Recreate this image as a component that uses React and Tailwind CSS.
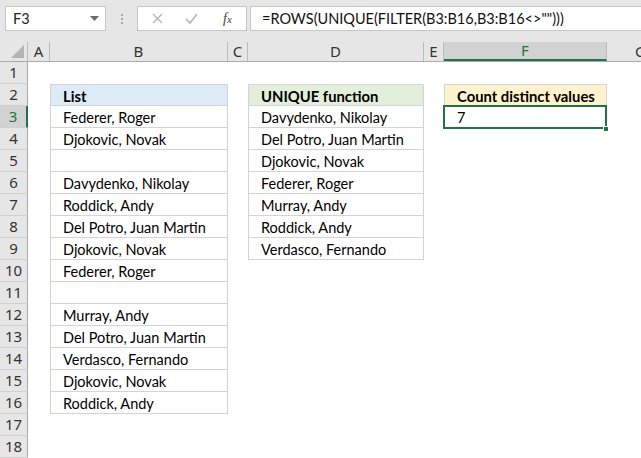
import React from 'react'

const cols = [
  { key: 'A', w: 'w-[22px]' },
  { key: 'B', w: 'w-[178px]' },
  { key: 'C', w: 'w-[20px]' },
  { key: 'D', w: 'w-[176px]' },
  { key: 'E', w: 'w-[20px]' },
  { key: 'F', w: 'w-[163px]' },
  { key: 'G', w: 'w-[68px] shrink-0' },
]

const listB = [
  'Federer, Roger', 'Djokovic, Novak', '', 'Davydenko, Nikolay', 'Roddick, Andy',
  'Del Potro, Juan Martin', 'Djokovic, Novak', 'Federer, Roger', '', 'Murray, Andy',
  'Del Potro, Juan Martin', 'Verdasco, Fernando', 'Djokovic, Novak', 'Roddick, Andy',
]

const listD = [
  'Davydenko, Nikolay', 'Del Potro, Juan Martin', 'Djokovic, Novak', 'Federer, Roger',
  'Murray, Andy', 'Roddick, Andy', 'Verdasco, Fernando',
]

const cellFont = { fontFamily: 'Lato, "Liberation Sans", sans-serif' }

const Cell = ({ text, bold, bg, top }) => (
  <div
    className={`h-full flex items-center pl-[12px] pt-[2px] border-x border-b border-[#d4d4d4] ${top ? 'border-t' : ''} ${bg || ''} ${bold ? 'font-bold text-[14.8px]' : 'text-[14.5px]'} text-black whitespace-nowrap`}
    style={cellFont}
  >
    {text}
  </div>
)

const App = () => {
  const rows = Array.from({ length: 18 }, (_, i) => i + 1)

  const content = (r, col) => {
    if (col === 'B') {
      if (r === 2) return <Cell text="List" bold bg="bg-[#ddebf7]" top />
      if (r >= 3 && r <= 16) return <Cell text={listB[r - 3]} />
    }
    if (col === 'D') {
      if (r === 2) return <Cell text="UNIQUE function" bold bg="bg-[#e2efda]" top />
      if (r >= 3 && r <= 9) return <Cell text={listD[r - 3]} />
    }
    if (col === 'F') {
      if (r === 2) return <Cell text="Count distinct values" bold bg="bg-[#fff2cc]" top />
      if (r === 3) return <Cell text="7" />
    }
    return null
  }

  return (
    <div className="w-[641px] h-[458px] overflow-hidden bg-white select-none" style={{ fontFamily: '"Noto Sans", sans-serif' }}>
      {/* formula bar */}
      <div className="h-[42px] bg-[#e6e6e6] flex items-start pt-[6px] pl-[5px]">
        <div className="w-[101px] h-[25px] bg-white border border-[#c6c6c6] flex items-center justify-between pl-[7px] pr-[6px]">
          <span className="text-[14.5px] text-[#222]" style={cellFont}>F3</span>
          <svg width="9" height="5" viewBox="0 0 9 5"><path d="M0 0h9L4.5 5z" fill="#6b6b6b" /></svg>
        </div>
        <div className="w-[31px] h-[25px] flex flex-col items-center justify-center gap-[2px]">
          <span className="w-[2px] h-[2px] bg-[#a8a8a8]" />
          <span className="w-[2px] h-[2px] bg-[#a8a8a8]" />
          <span className="w-[2px] h-[2px] bg-[#a8a8a8]" />
        </div>
        <div className="w-[110px] h-[25px] bg-white border border-[#c6c6c6] flex items-center">
          <svg className="ml-[14px]" width="11" height="11" viewBox="0 0 11 11">
            <path d="M1 1l9 9M10 1l-9 9" stroke="#b5b5b5" strokeWidth="1.3" />
          </svg>
          <svg className="ml-[22px]" width="13" height="11" viewBox="0 0 13 11">
            <path d="M1 6l4 4 7-9" stroke="#b5b5b5" strokeWidth="1.6" fill="none" />
          </svg>
          <span className="ml-[25px] text-[14px] italic text-[#444]" style={{ fontFamily: '"Liberation Serif", serif' }}>
            f<span className="text-[11px]">x</span>
          </span>
        </div>
        <div className="ml-[3px] flex-1 h-[25px] bg-white border border-[#c6c6c6] border-r-0 flex items-center pl-[11px]">
          <span className="text-[14.5px] text-[#111] whitespace-nowrap" style={cellFont}>
            =ROWS(UNIQUE(FILTER(B3:B16,B3:B16&lt;&gt;"")))
          </span>
        </div>
      </div>

      {/* column headers */}
      <div className="h-[20px] flex bg-[#e6e6e6] border-b border-[#ababab]">
        <div className="w-[28px] shrink-0 h-full border-r border-[#bcbcbc] relative">
          <svg className="absolute right-[3px] bottom-[3px]" width="13" height="13" viewBox="0 0 13 13">
            <path d="M13 0V13H0z" fill="#b4b4b4" />
          </svg>
        </div>
        {cols.map(c => (
          <div
            key={c.key}
            className={`${c.w} shrink-0 h-full flex items-center justify-center text-[15px] border-r border-[#bcbcbc] ${c.key === 'F' ? 'bg-[#d2d2d2] text-[#217346] border-b-2 border-b-[#217346]' : 'text-[#333]'}`}
          >
            {c.key}
          </div>
        ))}
      </div>

      {/* grid rows */}
      <div className="relative">
        {rows.map(r => (
          <div key={r} className="h-[22px] flex">
            <div
              className={`w-[28px] shrink-0 h-full flex items-center justify-center text-[15px] border-b border-[#d0d0d0] ${r === 3 ? 'bg-[#d2d2d2] text-[#217346] border-r-2 border-r-[#217346]' : 'bg-[#e6e6e6] text-[#333] border-r border-r-[#ababab]'}`}
            >
              {r}
            </div>
            {cols.map(c => (
              <div key={c.key} className={`${c.w} shrink-0 h-full`}>
                {content(r, c.key)}
              </div>
            ))}
          </div>
        ))}
        {/* selection F3 */}
        <div className="absolute left-[443px] top-[43px] w-[164px] h-[24px] border-2 border-[#217346] pointer-events-none" />
        <div className="absolute left-[603px] top-[64px] w-[6px] h-[6px] bg-[#217346] border border-white pointer-events-none" />
      </div>
    </div>
  )
}

export default App
